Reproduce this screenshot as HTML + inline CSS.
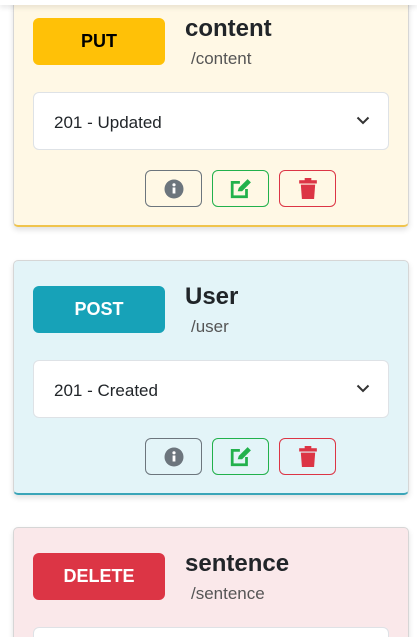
<!DOCTYPE html>
<html><head><style>
*{box-sizing:border-box;margin:0;padding:0}
html,body{width:417px;height:637px;overflow:hidden}
body{background:#fff;font-family:"Liberation Sans",sans-serif;position:relative}
.topbar{position:absolute;left:0;top:0;width:417px;height:5px;background:#fff;box-shadow:0 2px 6px rgba(0,0,0,.12);z-index:5}
.card{position:absolute;left:13px;width:396px;height:235px;border:1px solid #d6d6d6;border-radius:5px;box-shadow:0 3px 6px rgba(0,0,0,.12)}
.badge{position:absolute;left:19px;top:25px;width:132px;height:47px;border-radius:6px;font-weight:bold;font-size:18px;display:flex;align-items:center;justify-content:center}
.title{position:absolute;left:171px;top:22px;font-size:24px;font-weight:bold;color:#212529}
.path{position:absolute;left:177px;top:56px;font-size:17px;color:#555}
.sel{position:absolute;left:19px;top:99px;width:356px;height:58px;background:#fff;border:1px solid #dee2e6;border-radius:6px;font-size:17px;color:#212529;padding:20px 0 0 20px}
.sel svg{position:absolute;right:18px;top:23px}
.btn{position:absolute;top:177px;width:57px;height:37px;border:1px solid;border-radius:6px;display:flex;align-items:center;justify-content:center}
</style></head><body>
<div class="topbar"></div>

<div class="card" style="top:-8px;background:#fff8e5;border-bottom:2px solid #f0c44c">
<div class="badge" style="background:#ffc107;color:#000">PUT</div>
<div class="title">content</div><div class="path">/content</div>
<div class="sel">201 - Updated<svg width="14" height="9" viewBox="0 0 14 9"><path d="M1.5 1.5 7 7 12.5 1.5" fill="none" stroke="#333" stroke-width="2"/></svg></div>
<div class="btn" style="left:131px;border-color:#6c757d"><svg width="20" height="20" viewBox="0 0 20 20"><circle cx="10" cy="10" r="9.5" fill="#6c757d"/><rect x="8.6" y="8.5" width="2.8" height="6" fill="#fff"/><circle cx="10" cy="5.8" r="1.6" fill="#fff"/></svg></div>
<div class="btn" style="left:198px;border-color:#22b14c"><svg width="22" height="20" viewBox="0 0 20 18"><path d="M9 3H2v13h13V9" fill="none" stroke="#22b14c" stroke-width="2.5"/><path d="M7 11l1-3 8-8 3 3-8 8z" fill="#22b14c"/></svg></div>
<div class="btn" style="left:265px;border-color:#dc3545"><svg width="18" height="21" viewBox="0 0 16 19"><rect x="0" y="2" width="16" height="3" fill="#dc3545"/><rect x="5" y="0" width="6" height="3" fill="#dc3545"/><path d="M1.5 6h13l-1 13h-11z" fill="#dc3545"/></svg></div>
</div>

<div class="card" style="top:260px;background:#e3f4f8;border-bottom:2px solid #3aa5b8">
<div class="badge" style="background:#17a2b8;color:#fff">POST</div>
<div class="title">User</div><div class="path">/user</div>
<div class="sel">201 - Created<svg width="14" height="9" viewBox="0 0 14 9"><path d="M1.5 1.5 7 7 12.5 1.5" fill="none" stroke="#333" stroke-width="2"/></svg></div>
<div class="btn" style="left:131px;border-color:#6c757d"><svg width="20" height="20" viewBox="0 0 20 20"><circle cx="10" cy="10" r="9.5" fill="#6c757d"/><rect x="8.6" y="8.5" width="2.8" height="6" fill="#fff"/><circle cx="10" cy="5.8" r="1.6" fill="#fff"/></svg></div>
<div class="btn" style="left:198px;border-color:#22b14c"><svg width="22" height="20" viewBox="0 0 20 18"><path d="M9 3H2v13h13V9" fill="none" stroke="#22b14c" stroke-width="2.5"/><path d="M7 11l1-3 8-8 3 3-8 8z" fill="#22b14c"/></svg></div>
<div class="btn" style="left:265px;border-color:#dc3545"><svg width="18" height="21" viewBox="0 0 16 19"><rect x="0" y="2" width="16" height="3" fill="#dc3545"/><rect x="5" y="0" width="6" height="3" fill="#dc3545"/><path d="M1.5 6h13l-1 13h-11z" fill="#dc3545"/></svg></div>
</div>

<div class="card" style="top:527px;background:#fae8ea">
<div class="badge" style="background:#dc3545;color:#fff">DELETE</div>
<div class="title">sentence</div><div class="path">/sentence</div>
<div class="sel"></div>
</div>
</body></html>
